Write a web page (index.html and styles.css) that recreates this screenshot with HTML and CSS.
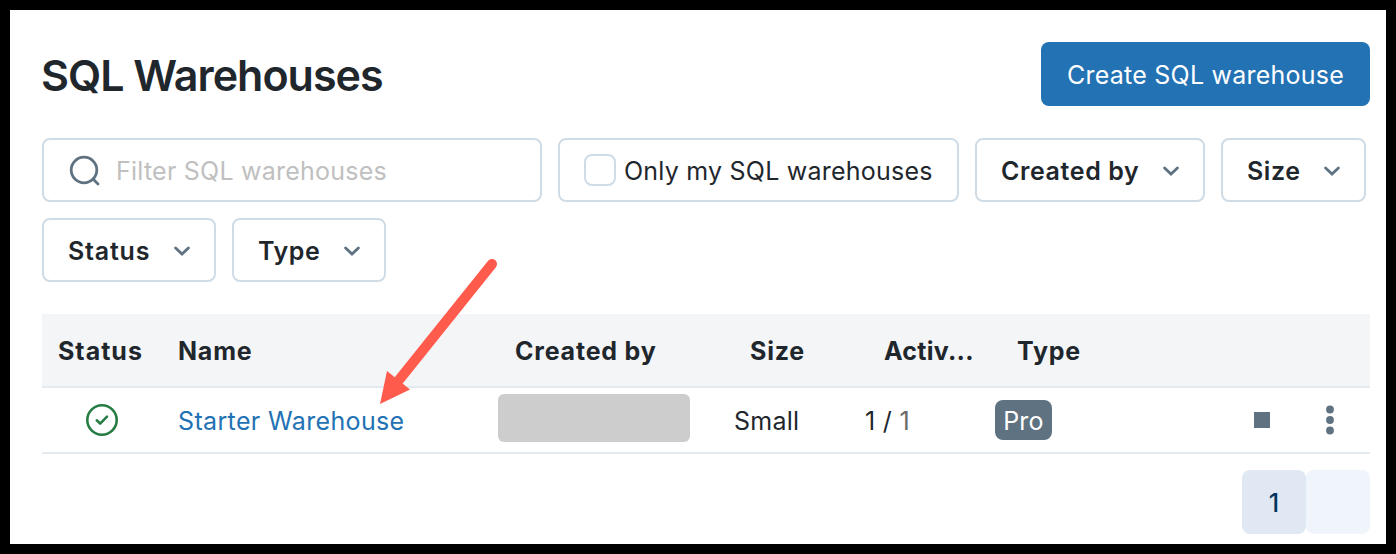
FILE: index.html
```
<!DOCTYPE html>
<html lang="en">
<head>
<meta charset="utf-8">
<title>SQL Warehouses</title>
<link rel="stylesheet" href="styles.css">
</head>
<body>
<main class="page">
  <header class="header">
    <h1 class="title">SQL Warehouses</h1>
    <button class="create">Create SQL warehouse</button>
  </header>
  <div class="filters">
    <div class="control search">
      <svg class="search-icon" width="32" height="32" viewBox="0 0 32 32"><circle cx="16" cy="16" r="12.8" /><path d="M25 25L30 30" /></svg>
      <span class="placeholder">Filter SQL warehouses</span>
    </div>
    <label class="control mine"><span class="checkbox"></span><span class="mine-text">Only my SQL warehouses</span></label>
    <button class="control select created"><span>Created by</span><svg class="chevron" width="16" height="10" viewBox="0 0 16 10"><path d="M1.6 2L8 8L14.4 2" /></svg></button>
    <button class="control select size"><span>Size</span><svg class="chevron" width="16" height="10" viewBox="0 0 16 10"><path d="M1.6 2L8 8L14.4 2" /></svg></button>
    <button class="control select status"><span>Status</span><svg class="chevron" width="16" height="10" viewBox="0 0 16 10"><path d="M1.6 2L8 8L14.4 2" /></svg></button>
    <button class="control select type"><span>Type</span><svg class="chevron" width="16" height="10" viewBox="0 0 16 10"><path d="M1.6 2L8 8L14.4 2" /></svg></button>
  </div>
  <section class="table">
    <div class="row head">
      <span class="cell head-status">Status</span>
      <span class="cell">Name</span>
      <span class="cell head-created">Created by</span>
      <span class="cell head-size">Size</span>
      <span class="cell head-active">Activ...</span>
      <span class="cell head-type">Type</span>
    </div>
    <div class="row body-row">
      <span class="cell state"><svg width="32" height="32" viewBox="0 0 32 32"><circle cx="16" cy="16" r="14.7" /><path d="M10.8 16.3L14.2 19.6L21 12.700" /></svg></span>
      <a class="cell link">Starter Warehouse</a>
      <span class="cell"><span class="redacted"></span></span>
      <span class="cell small">Small</span>
      <span class="cell count">1 / <span class="max">1</span></span>
      <span class="cell"><span class="tag">Pro</span></span>
      <span class="actions">
        <span class="stop"></span>
        <svg width="8" height="30" viewBox="0 0 8 30"><circle cx="4" cy="4.500" r="3.9" /><circle cx="4" cy="15" r="3.9" /><circle cx="4" cy="25.500" r="3.9" /></svg>
      </span>
    </div>
  </section>
  <nav class="pager"><span class="page-number">1</span><span class="page-next"></span></nav>
  <svg class="arrow" width="130" height="160" viewBox="0 0 130 160"><path class="shaft" d="M122 14L29 130" /><path class="tip" d="M10 154L17 121L40 139.500Z" /></svg>
</main>
</body>
</html>
```
FILE: styles.css
```
* { box-sizing: border-box; }
body {
  margin: 0;
  font: 400 25px/32px Inter, "Liberation Sans", sans-serif;
  letter-spacing: 0.23px;
  color: #1f272d;
}
button { font: inherit; color: inherit; letter-spacing: inherit; }
.page {
  position: relative;
  width: 1396px;
  height: 554px;
  padding: 32px 16px 0 32px;
  border: 10px solid #000;
  background: #fff;
}
.header {
  display: flex;
  justify-content: space-between;
  align-items: center;
  height: 64px;
}
.title {
  margin: 0 0 0 -1px;
  padding-top: 2px;
  font-size: 43px;
  line-height: 52px;
  font-weight: 600;
  letter-spacing: -1px;
  white-space: nowrap;
}
.create {
  width: 329px;
  height: 64px;
  padding: 2px 0 0;
  border: 0;
  border-radius: 8px;
  background: #2272b4;
  color: #fff;
  white-space: nowrap;
}
.filters {
  display: flex;
  flex-wrap: wrap;
  gap: 16px;
  margin-top: 32px;
}
.control {
  display: flex;
  align-items: center;
  height: 64px;
  padding: 0 24px;
  border: 2px solid #d0dce5;
  border-radius: 8px;
  background: #fff;
  white-space: nowrap;
}
.search { width: 500px; gap: 16px; }
.search-icon { fill: none; stroke: #5f7281; stroke-width: 2.8; stroke-linecap: round; }
.placeholder { color: #c0c0c0; padding-top: 2px; }
.mine { width: 401px; gap: 8px; }
.mine-text { padding-top: 2px; }
.checkbox {
  width: 32px;
  height: 32px;
  flex: none;
  border: 2px solid #d0dce5;
  border-radius: 8px;
}
.select { justify-content: space-between; font-weight: 600; letter-spacing: 0.6px; }
.select span { padding-top: 2px; }
.created { width: 230px; }
.size { width: 145px; }
.status { width: 174px; letter-spacing: 0.8px; }
.type { width: 154px; }
.chevron { margin-top: 2px; fill: none; stroke: #5f7281; stroke-width: 2.8; stroke-linecap: round; }
.table { margin-top: 32px; }
.row {
  display: grid;
  grid-template-columns: 120px 320px 236px 130px 131px 180px 1fr;
  align-items: center;
  border-bottom: 2px solid #e4ebf0;
}
.head { height: 74px; padding-top: 2px; background: #f3f5f7; font-weight: 650; letter-spacing: 0.8px; }
.body-row { height: 66px; }
.cell { padding-left: 16px; white-space: nowrap; }
.head-status { letter-spacing: 1px; }
.head-created { padding-left: 33px; }
.head-size { padding-left: 32px; }
.head-active { padding-left: 36px; letter-spacing: 0.25px; }
.head-type { padding-left: 38px; }
.state { padding-left: 44px; height: 32px; display: flex; }
.state svg { fill: none; stroke: #277c43; stroke-width: 2.6; stroke-linecap: round; stroke-linejoin: round; }
.link { color: #2272b4; padding-top: 2px; letter-spacing: 0.36px; }
.small, .count { padding-top: 2px; }
.count { padding-left: 17px; letter-spacing: 0.3px; }
.max { color: #6b6b6b; }
.redacted {
  display: block;
  width: 192px;
  height: 48px;
  margin-top: -4px;
  border-radius: 6px;
  background: #cdcdcd;
}
.tag {
  display: block;
  width: 57px;
  height: 40px;
  padding-top: 5px;
  border-radius: 8px;
  background: #5f7281;
  color: #fff;
  text-align: center;
}
.actions {
  display: flex;
  justify-content: flex-end;
  align-items: center;
  gap: 56px;
  padding-right: 36px;
}
.actions svg { fill: #5f7281; }
.stop { width: 16px; height: 16px; background: #5f7281; }
.pager { display: flex; justify-content: flex-end; margin-top: 16px; }
.page-number, .page-next { width: 64px; height: 64px; border-radius: 8px; }
.page-number {
  padding-top: 17px;
  background: #e0e8f3;
  color: #04355d;
  font-weight: 500;
  text-align: center;
}
.page-next { background: #f0f5fc; }
.arrow { position: absolute; left: 360px; top: 240px; }
.shaft { stroke: #ff5b4d; stroke-width: 10; stroke-linecap: round; }
.tip { fill: #ff5b4d; }
```
